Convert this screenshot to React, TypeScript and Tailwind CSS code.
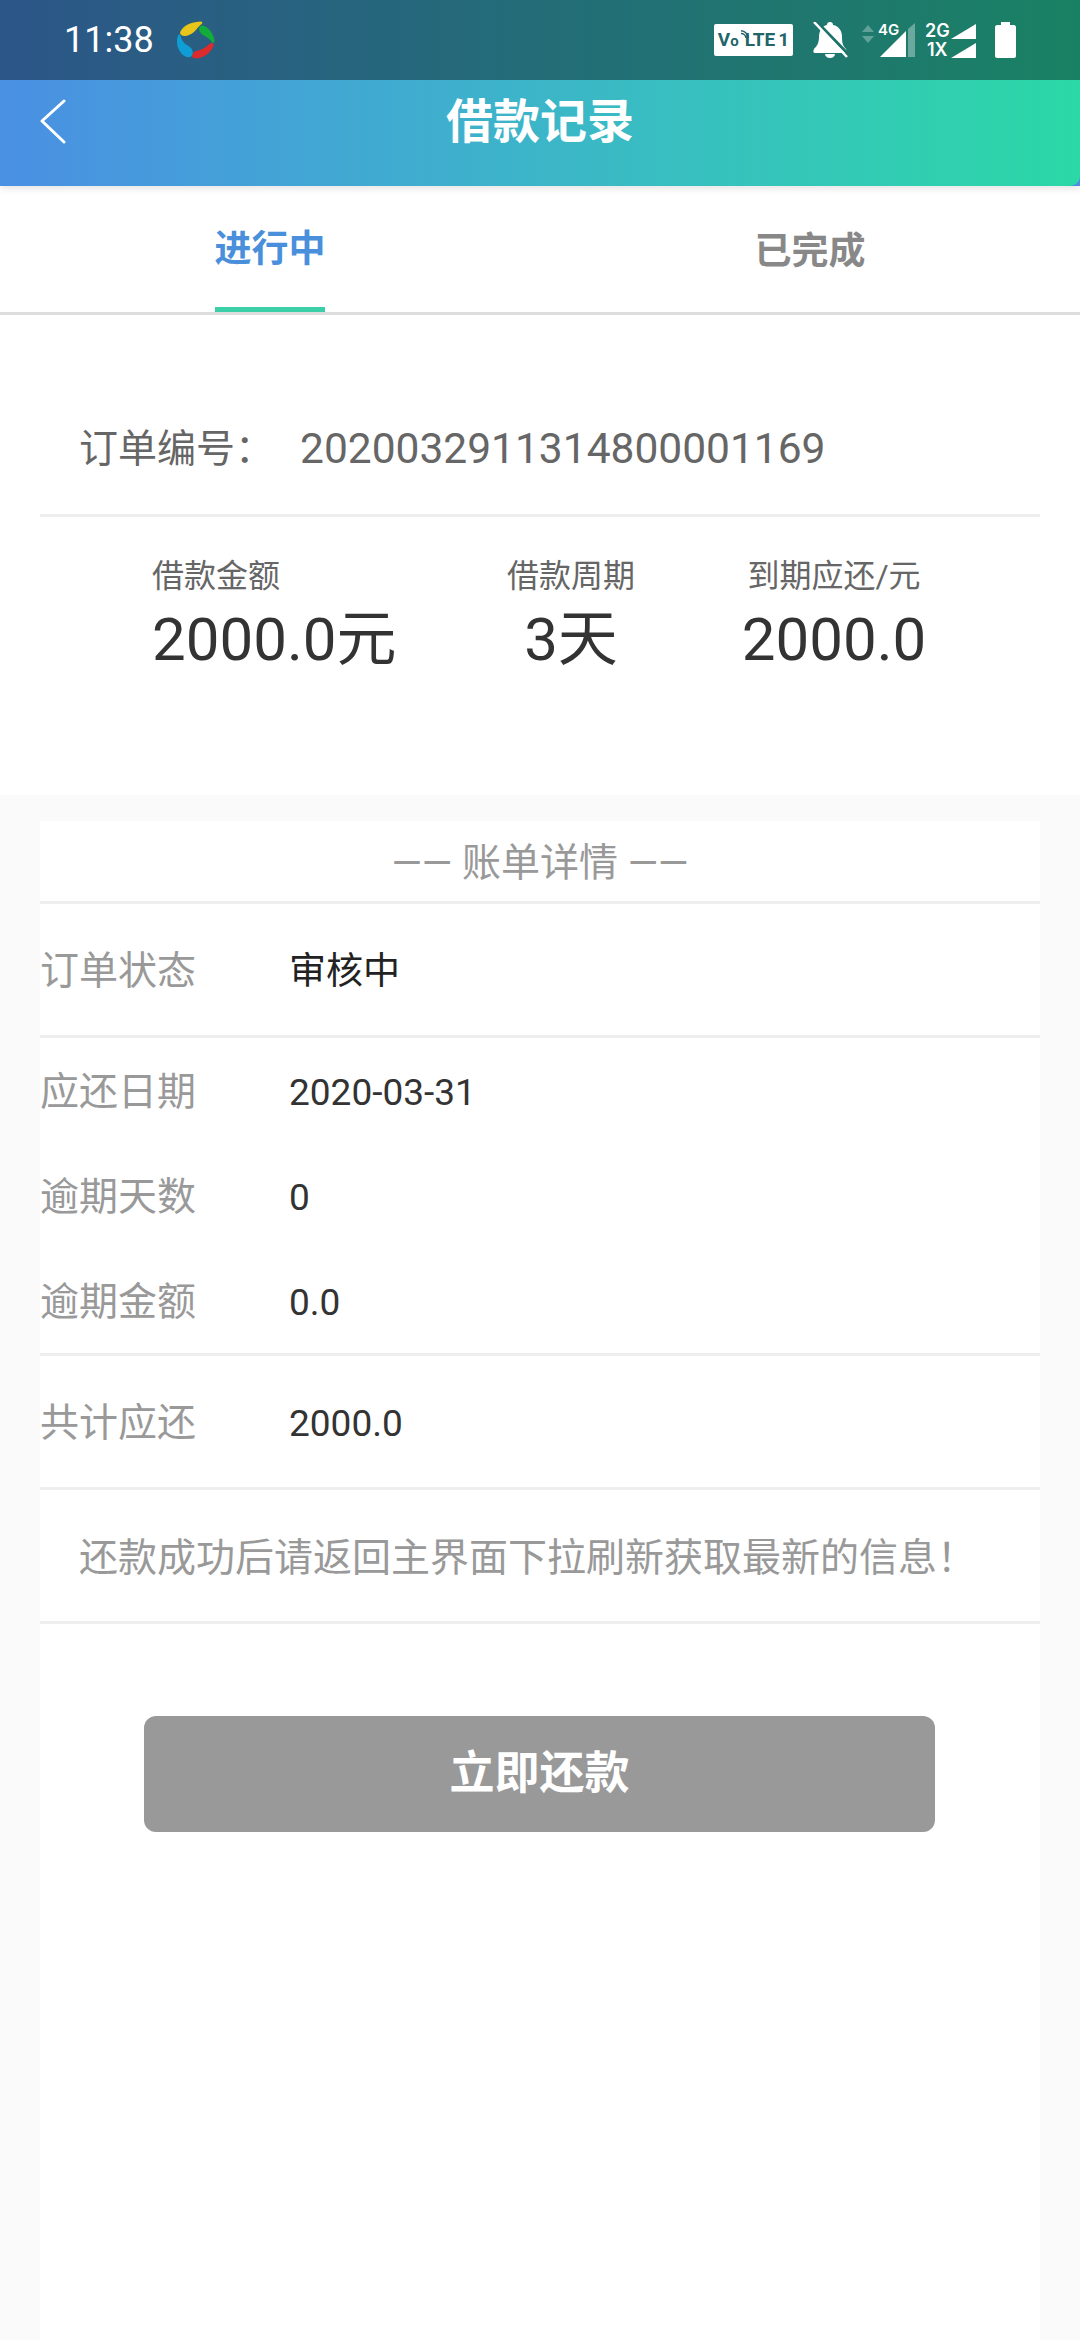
const font = "font-['Roboto','Noto_Sans_CJK_SC',sans-serif]";

function Logo() {
  return (
    <svg width="40" height="40" viewBox="0 0 40 40">
      <path d="M4 13C5 8 12 2 25 1.500C27 2 26.500 3.500 25 4.500C22 7 21 9 18 12C14 16 5 18 4 13z" fill="#e8c619" />
      <path d="M26 5.500C32 6 38 14 38.500 21C38.500 24 36 23 35 21C33 18 30 17 27 15C22 12 22 6 26 5.500z" fill="#12ac3a" />
      <path d="M36 23C38 23 38 25 37 27C34 33 28 38 20 38.500C16 38.500 14.500 35 18 32C22 30 26 30 30 27C32 25 34 23 36 23z" fill="#dd2b2b" />
      <path d="M2.500 14.500C1 17 0 24 3 30C6 35 10 38 14 37C17 36 18 32 15 28C12 25 8 24 6 20C5 17 4 13 2.500 14.500z" fill="#0f9dd6" />
    </svg>
  );
}

function Volte() {
  return (
    <div className="relative flex h-[32px] w-[79px] items-baseline justify-center rounded-[2px] bg-white pt-[5px] text-[19px] leading-[22px] font-bold text-[#22666b]">
      <span>V</span>
      <span className="text-[15px]">o</span>
      <svg width="9" height="9" viewBox="0 0 9 9" className="absolute top-[6px] left-[26px]">
        <path d="M1 3.500a5 5 0 0 1 5 4.500M1 0.800a8 8 0 0 1 7.500 7.200" fill="none" stroke="#22666b" strokeWidth="1.500" />
      </svg>
      <span className="ml-[6px]">LTE</span>
      <span className="ml-[3px]">1</span>
    </div>
  );
}

function Bell() {
  return (
    <svg width="36" height="36" viewBox="0 0 36 36" className="ml-[19px]">
      <path d="M18 0c2 0 3 1 3 3 6 1 9 6 9 12 0 6 1 9 4 12 1 2 1 4-1 4H3c-2 0-2-2-1-4 3-3 5-6 5-12 0-6 3-11 8-12 0-2 1-3 3-3z" fill="#fff" />
      <path d="M13 32h10c0 2-2 4-5 4s-5-2-5-4z" fill="#fff" />
      <path d="M4 -1l33 34" stroke="#1e7269" strokeWidth="3" />
      <path d="M2 0l33 35" stroke="#fff" strokeWidth="2.500" />
    </svg>
  );
}

function Signal() {
  return (
    <div className="relative ml-[14px] h-[36px] w-[53px]">
      <svg width="53" height="36" viewBox="0 0 53 36" className="absolute top-0 left-0">
        <path d="M0 10l6-7 6 7zM0 14h12l-6 7z" fill="#fff" fillOpacity="0.3" />
        <path d="M18 35l26-26v26z" fill="#fff" />
        <path d="M46 7l7-6v34h-7z" fill="#fff" fillOpacity="0.35" />
      </svg>
      <span className="absolute top-[0px] left-[16px] font-['Inter',sans-serif] text-[15px] leading-none font-semibold text-white">4G</span>
    </div>
  );
}

function DualSignal() {
  return (
    <div className="ml-[10px] flex w-[52px] flex-col gap-[3px] font-['Inter',sans-serif] text-[18px] leading-[16px] font-semibold text-white">
      {[
        { label: "2G", pad: "" },
        { label: "1X", pad: "pl-[2px]" },
      ].map((row) => (
        <div key={row.label} className="flex items-end justify-between">
          <span className={row.pad}>{row.label}</span>
          <svg width="26" height="15" viewBox="0 0 26 15">
            <path d="M0 15L25 0v15z" fill="#fff" />
          </svg>
        </div>
      ))}
    </div>
  );
}

function Battery() {
  return (
    <svg width="21" height="36" viewBox="0 0 21 36" className="ml-[18px]">
      <path d="M6 0h9v3h4c1 0 2 1 2 2v29c0 1-1 2-2 2H2c-1 0-2-1-2-2V5c0-1 1-2 2-2h4z" fill="#fff" />
    </svg>
  );
}

function StatusBar() {
  return (
    <div className="flex h-[80px] items-center bg-black/40 pr-[64px] pl-[64px]">
      <span className="text-[36px] leading-none text-white">11:38</span>
      <div className="ml-[22px]">
        <Logo />
      </div>
      <div className="ml-auto flex items-center">
        <Volte />
        <Bell />
        <Signal />
        <DualSignal />
        <Battery />
      </div>
    </div>
  );
}

function DetailRow({ label, value, dark, className = "" }: { label: string; value: string; dark?: boolean; className?: string }) {
  return (
    <div className={`flex items-center ${className}`}>
      <span className="w-[249px] text-[39px] leading-none text-[#999]">{label}</span>
      <span className={`text-[37px] leading-none ${dark ? "text-[#222]" : "text-[#333]"}`}>{value}</span>
    </div>
  );
}

export default function App() {
  return (
    <div className={`${font} flex h-[2340px] w-[1080px] flex-col overflow-hidden bg-[#fafafa]`}>
      <div className="relative z-10 h-[186px] bg-gradient-to-r from-[#4a8fe3] to-[#2bd8a6] shadow-[0_2px_8px_rgba(0,0,0,0.12)]">
        <StatusBar />
        <div className="relative flex h-[106px] items-center justify-center">
          <svg width="28" height="46" viewBox="0 0 28 46" className="absolute top-[19px] left-[39px]">
            <path d="M25 2L3 22l22 21" fill="none" stroke="#fff" strokeWidth="3" strokeLinecap="round" strokeLinejoin="round" />
          </svg>
          <h1 className="mb-[24px] text-[47px] leading-none font-bold text-white">借款记录</h1>
          <svg width="10" height="10" viewBox="0 0 10 10" className="absolute right-0 bottom-0">
            <path d="M10 0v10H0a10 10 0 0 0 10-10z" fill="#4a8fe3" />
          </svg>
        </div>
      </div>

      <div className="flex h-[129px] border-b-[3px] border-[#dedede] bg-white">
        <div className="flex flex-1 justify-center">
          <div className="flex h-[126px] w-[110px] items-center justify-center border-b-[5px] border-[#3bcfa8] pt-[6px] text-[37px] font-bold whitespace-nowrap text-[#4a8fdc]">进行中</div>
        </div>
        <div className="flex flex-1 items-center justify-center pt-[6px] text-[37px] font-bold text-[#888]">已完成</div>
      </div>

      <div className="h-[480px] bg-white px-[40px]">
        <div className="flex h-[202px] items-center border-b-[3px] border-[#eee] pt-[70px] pl-[39px] text-[#666]">
          <span className="w-[221px] text-[39px] leading-none">订单编号：</span>
          <span className="text-[42.5px] leading-none">2020032911314800001169</span>
        </div>
        <div className="flex pt-[37px] text-[#333]">
          <div className="ml-[112px] flex w-[301px] flex-col">
            <span className="text-[32px] leading-[44px] text-[#666]">借款金额</span>
            <span className="text-[60px] leading-[84px]">2000.0元</span>
          </div>
          <div className="flex w-[236px] flex-col items-center">
            <span className="text-[32px] leading-[44px] text-[#666]">借款周期</span>
            <span className="text-[60px] leading-[84px]">3天</span>
          </div>
          <div className="ml-[45px] flex w-[200px] flex-col items-center">
            <span className="text-[32px] leading-[44px] whitespace-nowrap text-[#666]">到期应还/元</span>
            <span className="text-[60px] leading-[84px]">2000.0</span>
          </div>
        </div>
      </div>

      <div className="mx-[40px] mt-[26px] flex-1 bg-white">
        <div className="flex h-[83px] items-center justify-center border-b-[3px] border-[#eee] pt-[4px] text-[39px] leading-none text-[#999]">—— 账单详情 ——</div>
        <DetailRow label="订单状态" value="审核中" dark className="h-[134px] border-b-[3px] border-[#eee] pt-[3px]" />
        <div className="flex h-[318px] flex-col justify-center gap-[66px] border-b-[3px] border-[#eee] pt-[3px]">
          <DetailRow label="应还日期" value="2020-03-31" />
          <DetailRow label="逾期天数" value="0" />
          <DetailRow label="逾期金额" value="0.0" />
        </div>
        <DetailRow label="共计应还" value="2000.0" className="h-[134px] border-b-[3px] border-[#eee] pt-[3px]" />
        <div className="flex h-[134px] items-center border-b-[3px] border-[#eee] pt-[5px] pl-[39px] text-[39px] leading-none text-[#999]">
          还款成功后请返回主界面下拉刷新获取最新的信息！
        </div>
        <button className="mt-[92px] ml-[104px] flex h-[116px] w-[791px] items-center justify-center rounded-[12px] bg-[#999] text-[45px] font-bold text-white">
          立即还款
        </button>
      </div>
    </div>
  );
}
